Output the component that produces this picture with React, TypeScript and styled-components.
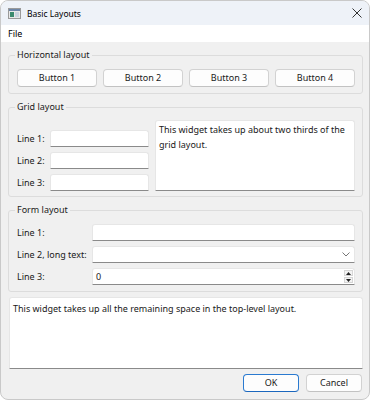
import * as React from 'react'
import styled, { createGlobalStyle } from 'styled-components';

const Global = createGlobalStyle`
  html, body {
    margin: 0;
    padding: 0;
    background: #ffffff;
  }
  body {
    font-family: "Noto Sans", "Open Sans", sans-serif;
    font-size: 9px;
    color: #1a1a1a;
  }
`

const Window = styled.div`
  width: 370px;
  height: 400px;
  box-sizing: border-box;
  border: 1px solid #c9c9c9;
  border-radius: 8px;
  overflow: hidden;
  display: flex;
  flex-direction: column;
  background: #f0f0f0;
`

const TitleBar = styled.div`
  height: 24px;
  background: #eef2f8;
  display: flex;
  align-items: center;
  padding: 0 0 0 7px;
  gap: 6px;
`

const Title = styled.span`
  flex: 1;
  font-size: 8.5px;
  color: #000;
`

const CloseBtn = styled.div`
  width: 22px;
  height: 24px;
  margin-right: 1px;
  display: flex;
  align-items: center;
  justify-content: center;
`

const MenuBar = styled.div`
  height: 17px;
  background: #ffffff;
  display: flex;
  align-items: center;
  padding-left: 7px;
  font-size: 9px;
  color: #000;
`

const Body = styled.div`
  flex: 1;
  display: flex;
  flex-direction: column;
  gap: 5px;
  padding: 5px 6px 7px 7px;
  min-height: 0;
`

const Group = styled.fieldset<{ $top: number; $bottom: number }>`
  margin: 0;
  border: 1px solid #dcdcdc;
  border-radius: 3px;
  padding: ${p => p.$top}px 7px ${p => p.$bottom}px 8px;
  min-width: 0;
`

const Legend = styled.legend`
  padding: 0 2px;
  margin-left: -2px;
  line-height: 16px;
  font-size: 9px;
  color: #1a1a1a;
`

const ButtonRow = styled.div`
  display: grid;
  grid-template-columns: repeat(4, 1fr);
  gap: 6px;
`

const PushButton = styled.button<{ $default?: boolean }>`
  height: 18px;
  box-sizing: border-box;
  background: #fdfdfd;
  border: 1px solid ${p => (p.$default ? '#2a7ad0' : '#d2d2d2')};
  border-bottom-color: ${p => (p.$default ? '#1a66bd' : '#c2c2c2')};
  border-radius: 4px;
  font-family: inherit;
  font-size: 9px;
  color: #1a1a1a;
  padding: 0;
  line-height: 14px;
`

const Grid = styled.div`
  display: grid;
  grid-template-columns: 27px 99px 1fr;
  grid-template-rows: 1fr 17px 17px 17px;
  column-gap: 6px;
  row-gap: 5px;
  height: 71px;
`

const Label = styled.span<{ $row?: number }>`
  display: flex;
  align-items: center;
  font-size: 9px;
  color: #1a1a1a;
  white-space: nowrap;
  ${p => (p.$row ? `grid-row: ${p.$row};` : '')}
`

const LineEdit = styled.div<{ $row?: number }>`
  box-sizing: border-box;
  height: 17px;
  background: #ffffff;
  border: 1px solid #e6e6e6;
  border-bottom: 1px solid #8a8a8a;
  border-radius: 3px 3px 0 0;
  display: flex;
  align-items: center;
  padding: 0 3px;
  font-size: 9px;
  ${p => (p.$row ? `grid-row: ${p.$row}; grid-column: 2;` : '')}
`

const TextEdit = styled.div<{ $grow?: boolean }>`
  box-sizing: border-box;
  background: #ffffff;
  border: 1px solid #e6e6e6;
  border-bottom: 1px solid #8a8a8a;
  border-radius: 3px 3px 0 0;
  padding: ${p => (p.$grow ? '3px' : '1px')} 3px;
  line-height: 15px;
  font-size: 9px;
  color: #1a1a1a;
  ${p => (p.$grow ? 'flex: 1; margin-left: 1px;' : 'grid-row: 1 / 5; grid-column: 3;')}
`

const Form = styled.div`
  display: grid;
  grid-template-columns: 70px 1fr;
  grid-auto-rows: 17px;
  column-gap: 5px;
  row-gap: 5px;
`

const Combo = styled(LineEdit)`
  justify-content: flex-end;
  padding-right: 4px;
`

const Spin = styled(LineEdit)`
  justify-content: space-between;
  padding-right: 1px;
`

const SpinArrows = styled.div`
  display: flex;
  flex-direction: column;
  gap: 1px;
`

const SpinArrow = styled.div`
  width: 9px;
  height: 6px;
  background: #f3f3f3;
  border: 1px solid #d6d6d6;
  box-sizing: border-box;
  display: flex;
  align-items: center;
  justify-content: center;
`

const Footer = styled.div`
  display: flex;
  justify-content: flex-end;
  gap: 7px;
  padding-right: 1px;
`

const DialogButton = styled(PushButton)`
  width: 56px;
`

function WindowIcon() {
    return <svg width="13" height="11" viewBox="0 0 13 11">
        <rect x="0.5" y="0.5" width="12" height="10" fill="#e8e8e8" stroke="#9a9a9a" />
        <rect x="1" y="1" width="11" height="2" fill="#6e86a8" />
        <rect x="2" y="4" width="4" height="5" fill="#3b8a6e" />
        <rect x="7" y="4" width="4" height="5" fill="#c9d3de" />
    </svg>
}

function App() {
    return <>
        <Global />
        <Window>
            <TitleBar>
                <WindowIcon />
                <Title>Basic Layouts</Title>
                <CloseBtn>
                    <svg width="10" height="10" viewBox="0 0 10 10">
                        <path d="M0.5 0.5 L9.5 9.5 M9.5 0.5 L0.5 9.5" stroke="#333" strokeWidth="1" />
                    </svg>
                </CloseBtn>
            </TitleBar>
            <MenuBar>File</MenuBar>
            <Body>
                <Group $top={6} $bottom={6}>
                    <Legend>Horizontal layout</Legend>
                    <ButtonRow>
                        <PushButton>Button 1</PushButton>
                        <PushButton>Button 2</PushButton>
                        <PushButton>Button 3</PushButton>
                        <PushButton>Button 4</PushButton>
                    </ButtonRow>
                </Group>
                <Group $top={5} $bottom={5}>
                    <Legend>Grid layout</Legend>
                    <Grid>
                        <Label $row={2}>Line 1:</Label>
                        <LineEdit $row={2} />
                        <Label $row={3}>Line 2:</Label>
                        <LineEdit $row={3} />
                        <Label $row={4}>Line 3:</Label>
                        <LineEdit $row={4} />
                        <TextEdit>This widget takes up about two thirds of the grid layout.</TextEdit>
                    </Grid>
                </Group>
                <Group $top={6} $bottom={6}>
                    <Legend>Form layout</Legend>
                    <Form>
                        <Label>Line 1:</Label>
                        <LineEdit />
                        <Label>Line 2, long text:</Label>
                        <Combo>
                            <svg width="8" height="5" viewBox="0 0 8 5">
                                <path d="M0.5 0.5 L4 4 L7.5 0.5" fill="none" stroke="#666" strokeWidth="0.9" />
                            </svg>
                        </Combo>
                        <Label>Line 3:</Label>
                        <Spin>
                            <span>0</span>
                            <SpinArrows>
                                <SpinArrow>
                                    <svg width="5" height="3" viewBox="0 0 5 3"><path d="M0 3 L2.5 0 L5 3 Z" fill="#222" /></svg>
                                </SpinArrow>
                                <SpinArrow>
                                    <svg width="5" height="3" viewBox="0 0 5 3"><path d="M0 0 L2.5 3 L5 0 Z" fill="#222" /></svg>
                                </SpinArrow>
                            </SpinArrows>
                        </Spin>
                    </Form>
                </Group>
                <TextEdit $grow>This widget takes up all the remaining space in the top-level layout.</TextEdit>
                <Footer>
                    <DialogButton $default>OK</DialogButton>
                    <DialogButton>Cancel</DialogButton>
                </Footer>
            </Body>
        </Window>
    </>
}

export default App
